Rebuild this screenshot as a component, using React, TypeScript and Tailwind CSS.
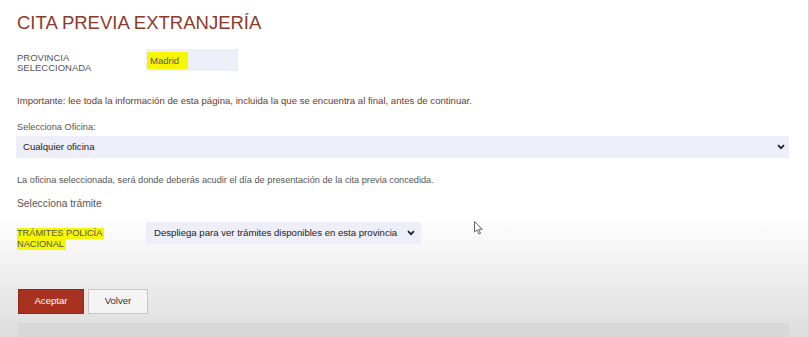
import React from "react";

const font = { fontFamily: '"Liberation Sans", Arial, sans-serif' };

function Chevron() {
  return (
    <svg width="8" height="6" viewBox="0 0 8 6" className="shrink-0">
      <path d="M1 1.2 L4 4.2 L7 1.2" fill="none" stroke="#222" strokeWidth="1.8" />
    </svg>
  );
}

function Cursor() {
  return (
    <svg width="10" height="14" viewBox="0 0 10 14" className="absolute left-[474px] top-[221px]">
      <path d="M0.5 0.5 L0.5 11 L3 8.8 L5 13 L6.6 12.2 L4.7 8.3 L8.3 8.3 Z" fill="#fff" stroke="#555" strokeWidth="0.9" strokeLinejoin="round" />
    </svg>
  );
}

export default function App() {
  return (
    <div
      style={font}
      className="relative h-[337px] w-[809px] overflow-hidden border-r border-[#d8d8d8] bg-[linear-gradient(to_bottom,#ffffff_0px,#ffffff_215px,#f1f1f2_265px,#e2e2e3_320px,#dcdcdd_337px)]"
    >
      <div className="flex flex-col pl-[17px] pr-[19px]">
        <h1 className="mt-[12px] text-[18.5px] leading-[22px] text-[#8b3b2b]">CITA PREVIA EXTRANJERÍA</h1>

        <div className="mt-[15px] flex items-start">
          <div className="mt-[4px] w-[129px] text-[9.5px] leading-[10px] text-[#555]">
            PROVINCIA
            <br />
            SELECCIONADA
          </div>
          <div className="flex h-[22px] w-[92px] items-center bg-[#eeeef8] pl-[1px]">
            <span className="bg-[#f6f600] px-[3px] py-[2px] pr-[9px] text-[9.5px] leading-[13px] text-[#555]">Madrid</span>
          </div>
        </div>

        <p className="mt-[22px] text-[9.6px] leading-[11px] text-[#6b3a2e]">
          Importante: lee toda la información de esta página, incluida la que se encuentra al final, antes de continuar.
        </p>

        <label className="mt-[16px] text-[9.2px] leading-[11px] text-[#555]">Selecciona Oficina:</label>
        <div className="mt-[3px] flex h-[22px] w-[773px] -ml-[1px] items-center justify-between bg-[#eeeef9] pl-[7px] pr-[4px]">
          <span className="text-[9.6px] leading-[12px] text-[#222]">Cualquier oficina</span>
          <Chevron />
        </div>

        <p className="mt-[17px] text-[9.2px] leading-[11px] text-[#555]">
          La oficina seleccionada, será donde deberás acudir el día de presentación de la cita previa concedida.
        </p>

        <h2 className="mt-[11px] text-[10.3px] leading-[13px] text-[#555]">Selecciona trámite</h2>

        <div className="mt-[12px] flex items-start">
          <div className="mt-[6px] flex w-[129px] flex-col text-[9.2px] leading-[10px] text-[#555]">
            <span className="w-fit bg-[#f6f600] pr-[2px] pb-[1px]">TRÁMITES POLICÍA</span>
            <span className="w-fit bg-[#f6f600] pr-[2px] pb-[1px]">NACIONAL</span>
          </div>
          <div className="flex h-[22px] w-[275px] items-center justify-between bg-[#eeeef8] pl-[8px] pr-[6px]">
            <span className="whitespace-nowrap text-[9.6px] leading-[12px] text-[#222]">Despliega para ver trámites disponibles en esta provincia</span>
            <Chevron />
          </div>
        </div>

        <div className="mt-[39px] flex gap-[4px] pl-[1px]">
          <button className="h-[25px] w-[66px] border border-[#8f2a1a] bg-[#a8321f] text-[9.6px] text-white">Aceptar</button>
          <button className="h-[25px] w-[60px] border border-[#cfc4c4] bg-[#f4f4f4] text-[9.6px] text-[#333]">Volver</button>
        </div>

        <div className="mt-[9px] ml-[1px] h-[20px] w-[771px] bg-[#d8d8d9]" />
      </div>
      <Cursor />
    </div>
  );
}
